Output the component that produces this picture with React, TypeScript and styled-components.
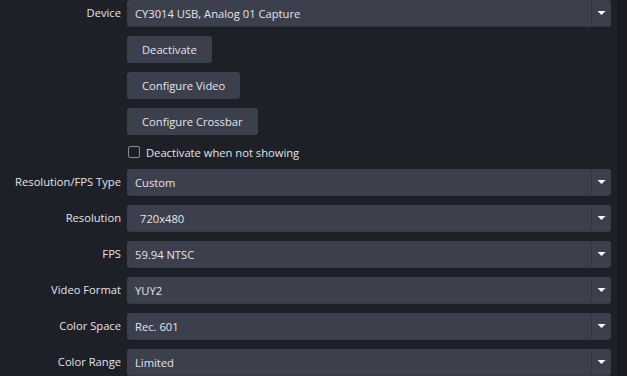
import React from "react";
import styled, { createGlobalStyle } from "styled-components";

const Global = createGlobalStyle`
  html, body { margin: 0; padding: 0; background: #1e2028; }
  body { font-family: "Open Sans", "Noto Sans", sans-serif; font-size: 11.2px; color: #e4e5ea; }
`;

const Page = styled.div`
  display: flex;
  width: 627px;
  height: 376px;
  overflow: hidden;
  background: #1e2028;
`;

const Form = styled.div`
  flex: 0 0 617px;
  display: grid;
  grid-template-columns: 121px 484px;
  column-gap: 6px;
  row-gap: 9px;
  align-content: start;
`;

const Strip = styled.div`
  flex: 1;
  background: #1b1c22;
`;

const Label = styled.div`
  grid-column: 1;
  height: 27px;
  box-sizing: border-box;
  padding-bottom: 3px;
  display: flex;
  align-items: center;
  justify-content: flex-end;
  white-space: nowrap;
  color: #e2e3e8;
`;

const Field = styled.div`
  grid-column: 2;
  display: flex;
  align-items: center;
`;

const Combo = styled.div`
  flex: 1;
  height: 27px;
  display: flex;
  align-items: stretch;
  background: #3c3f4c;
  border-radius: 3px;
  box-sizing: border-box;
  border-bottom: 1px solid #363945;
`;

const ComboText = styled.div<{ $editable?: boolean }>`
  flex: 1;
  display: flex;
  align-items: center;
  padding-left: ${(p) => (p.$editable ? "13px" : "8px")};
  white-space: nowrap;
  color: #e4e5ea;
`;

const ComboArrow = styled.div`
  width: 19px;
  border-left: 1px solid #33363f;
  display: flex;
  align-items: center;
  justify-content: center;
`;

const Button = styled.div`
  height: 27px;
  padding: 0 15px;
  display: flex;
  align-items: center;
  background: #3c3f4c;
  border-radius: 3px;
  white-space: nowrap;
  color: #e4e5ea;
`;

const CheckRow = styled.div`
  grid-column: 2;
  height: 16px;
  display: flex;
  align-items: center;
  gap: 6px;
  padding-left: 1px;
  white-space: nowrap;
  color: #e2e3e8;
`;

const Box = styled.span`
  width: 12px;
  height: 12px;
  box-sizing: border-box;
  border: 1px solid #8b8e99;
  border-radius: 2px;
`;

const Arrow = () => (
  <svg width="9" height="6" viewBox="0 0 9 6">
    <path d="M0.5 1 L8.5 1 L4.5 5 Z" fill="#ffffff" />
  </svg>
);

const Select = ({ value, editable }: { value: string; editable?: boolean }) => (
  <Field>
    <Combo>
      <ComboText $editable={editable}>{value}</ComboText>
      <ComboArrow>
        <Arrow />
      </ComboArrow>
    </Combo>
  </Field>
);

const rows: { label: string; value: string; editable?: boolean }[] = [
  { label: "Resolution/FPS Type", value: "Custom" },
  { label: "Resolution", value: "720x480", editable: true },
  { label: "FPS", value: "59.94 NTSC" },
  { label: "Video Format", value: "YUY2" },
  { label: "Color Space", value: "Rec. 601" },
  { label: "Color Range", value: "Limited" },
];

export default function App() {
  return (
    <>
      <Global />
      <Page>
        <Form>
          <Label>Device</Label>
          <Select value="CY3014 USB, Analog 01 Capture" />
          <Field>
            <Button>Deactivate</Button>
          </Field>
          <Field>
            <Button>Configure Video</Button>
          </Field>
          <Field>
            <Button>Configure Crossbar</Button>
          </Field>
          <CheckRow>
            <Box />
            Deactivate when not showing
          </CheckRow>
          {rows.map((r) => (
            <React.Fragment key={r.label}>
              <Label>{r.label}</Label>
              <Select value={r.value} editable={r.editable} />
            </React.Fragment>
          ))}
        </Form>
        <Strip />
      </Page>
    </>
  );
}
